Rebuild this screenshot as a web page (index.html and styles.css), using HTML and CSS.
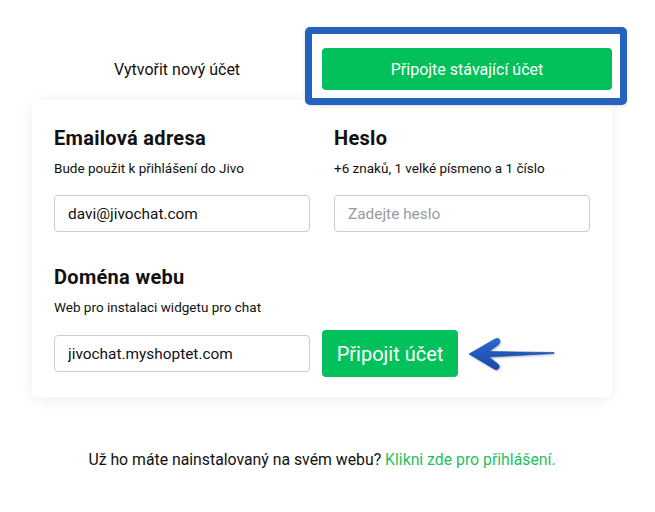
FILE: index.html
```html
<!DOCTYPE html>
<html lang="cs">
<head>
  <meta charset="UTF-8" />
  <meta name="viewport" content="width=device-width, initial-scale=1" />
  <title>Připojit účet</title>
  <link rel="stylesheet" href="styles.css">
</head>
<body>

<div class="page">
  <div class="tabs">
    <div class="tab">Vytvořit nový účet</div>
    <div class="tab tab-active">Připojte stávající účet</div>
    <div class="highlight"></div>
  </div>

  <div class="card">
    <div class="grid">
      <div class="field">
        <h2>Emailová adresa</h2>
        <p class="hint">Bude použit k přihlášení do Jivo</p>
        <input type="text" value="davi@jivochat.com">
      </div>
      <div class="field">
        <h2>Heslo</h2>
        <p class="hint">+6 znaků, 1 velké písmeno a 1 číslo</p>
        <input type="password" placeholder="Zadejte heslo">
      </div>
    </div>

    <div class="field field-domain">
      <h2>Doména webu</h2>
      <p class="hint">Web pro instalaci widgetu pro chat</p>
      <div class="row">
        <input type="text" value="jivochat.myshoptet.com">
        <button class="connect">Připojit účet</button>
        <svg class="arrow" width="90" height="38" viewBox="0 0 90 38">
          <defs>
            <linearGradient id="ag" x1="0" y1="0" x2="0" y2="1">
              <stop offset="0" stop-color="#2a6ad0"/>
              <stop offset="1" stop-color="#1748a6"/>
            </linearGradient>
          </defs>
          <path d="M3,19 L29,4 Q33,2 34,6 Q34,8 32,10 L23,16.5 L88,17.5 L88,18.5 L23,22 L32,29 Q34,31 33,33 Q31,36 28,34 Z"
                fill="url(#ag)" stroke="#1a4aa8" stroke-width="0.6" stroke-linejoin="round"/>
        </svg>
      </div>
    </div>
  </div>

  <p class="footer">Už ho máte nainstalovaný na svém webu? <a href="#">Klikni zde pro přihlášení.</a></p>
</div>

</body>
</html>
```

FILE: styles.css
```css
body {
  font-family: Roboto, "Liberation Sans", sans-serif;
  background-color: #fff;
  color: #111;
  margin: 0;
}
.page {
  width: 580px;
  margin: 0 32px;
  padding-top: 48px;
}
.tabs {
  position: relative;
  display: grid;
  grid-template-columns: 1fr 1fr;
  height: 42px;
}
.tab {
  display: flex;
  align-items: center;
  justify-content: center;
  font-size: 16px;
  color: #111;
}
.tab-active {
  background: #02c15a;
  color: #fff;
  border-radius: 4px;
}
.highlight {
  position: absolute;
  left: 273px;
  top: -21px;
  width: 308px;
  height: 64px;
  border: 7px solid #2462bd;
  border-radius: 5px;
  box-shadow: 0 1px 3px rgba(0,0,0,0.15);
  z-index: 2;
}
.card {
  margin-top: 10px;
  background: #fff;
  border-radius: 6px;
  box-shadow: 0 2px 14px rgba(0,0,0,0.08);
  padding: 26px 22px 20px;
}
.grid {
  display: grid;
  grid-template-columns: 256px 256px;
  column-gap: 24px;
}
.field h2 {
  margin: 0;
  font-size: 20px;
  line-height: 24px;
  font-weight: 700;
  letter-spacing: 0.3px;
  color: #111;
}
.hint {
  margin: 9px 0 18px;
  font-size: 13.5px;
  line-height: 18px;
  color: #111;
}
.field input {
  box-sizing: border-box;
  width: 256px;
  height: 37px;
  padding: 0 13px;
  border: 1px solid #ccc;
  border-radius: 4px;
  font-family: inherit;
  font-size: 15.4px;
  color: #111;
  outline: none;
}
.field input::placeholder {
  color: #9a9a9a;
}
.field-domain {
  margin-top: 33px;
}
.field-domain .hint {
  margin-bottom: 14px;
}
.row {
  display: flex;
  align-items: center;
}
.connect {
  margin-left: 12px;
  height: 47px;
  width: 136px;
  border: none;
  border-radius: 4px;
  background: #02c15a;
  color: #fff;
  font-family: inherit;
  font-size: 20px;
}
.arrow {
  margin-left: 8px;
  filter: drop-shadow(1px 1px 1px rgba(0,0,0,0.25));
}
.footer {
  margin: 53px 0 0;
  text-align: center;
  font-size: 15.8px;
  line-height: 20px;
  color: #111;
}
.footer a {
  color: #1fbf5f;
  text-decoration: none;
}
```
